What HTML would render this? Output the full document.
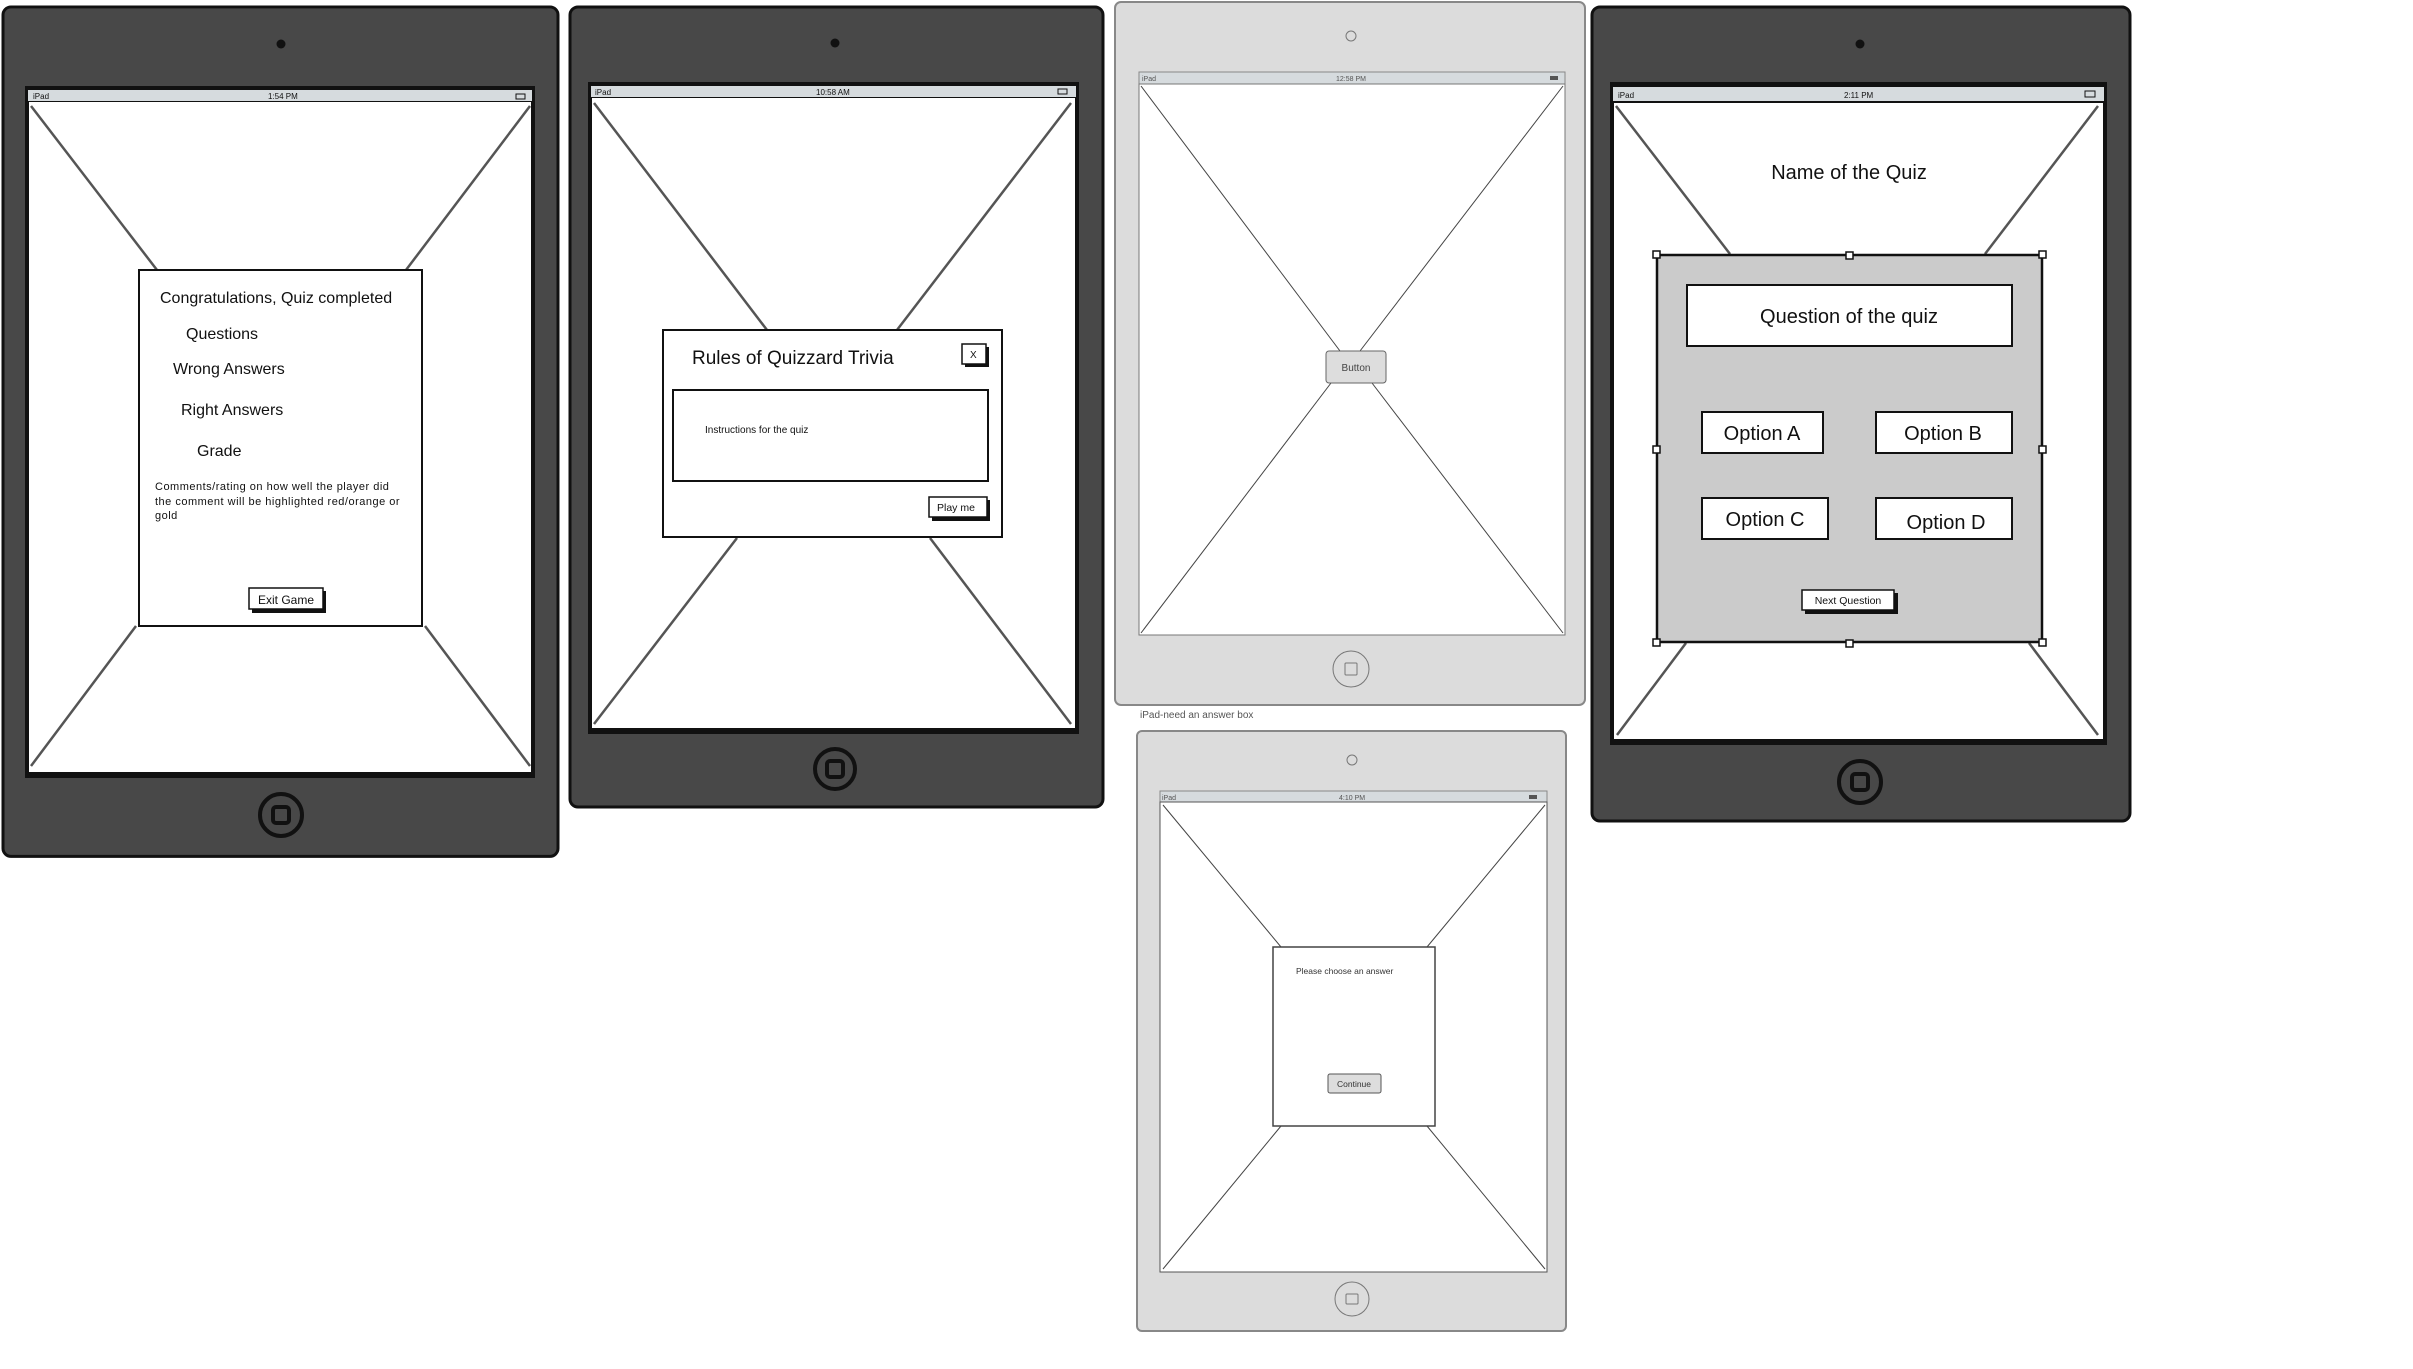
<!DOCTYPE html>
<html><head><meta charset="utf-8"><style>
html,body{margin:0;padding:0;background:#fff;width:2413px;height:1369px;overflow:hidden}
svg text{font-family:"Liberation Sans",sans-serif;fill:#111}
</style></head><body>
<svg width="2413" height="1369" viewBox="0 0 2413 1369" xmlns="http://www.w3.org/2000/svg">
<!-- Device 1 -->
<rect x="3" y="7" width="555" height="858" rx="8" fill="#484848" stroke="#111" stroke-width="3" transform="scale(1,0.99)"/>
<circle cx="281" cy="44" r="4.5" fill="#111"/>
<rect x="25" y="86" width="510" height="692" fill="#111"/>
<rect x="28" y="90" width="504" height="11" fill="#d6dbde"/>
<rect x="29" y="102" width="502" height="670" fill="#fff"/>
<text x="33" y="99" font-size="8">iPad</text><text x="268" y="99" font-size="8">1:54 PM</text>
<rect x="516" y="94" width="9" height="5" fill="none" stroke="#111"/>
<g stroke="#555" stroke-width="2.5">
<line x1="31" y1="106" x2="157" y2="270"/><line x1="530" y1="106" x2="406" y2="270"/>
<line x1="136" y1="626" x2="31" y2="766"/><line x1="425" y1="626" x2="530" y2="766"/></g>
<rect x="139" y="270" width="283" height="356" fill="#fff" stroke="#111" stroke-width="2"/>
<text x="160" y="303" font-size="16">Congratulations, Quiz completed</text>
<text x="186" y="339" font-size="16">Questions</text>
<text x="173" y="374" font-size="16">Wrong Answers</text>
<text x="181" y="415" font-size="16">Right Answers</text>
<text x="197" y="456" font-size="16">Grade</text>
<text x="155" y="490" font-size="11" letter-spacing="0.5">Comments/rating on how well the player did</text>
<text x="155" y="505" font-size="11" letter-spacing="0.5">the comment will be highlighted red/orange or</text>
<text x="155" y="519" font-size="11" letter-spacing="0.5">gold</text>
<rect x="252" y="591" width="74" height="22" fill="#111"/>
<rect x="249" y="588" width="74" height="21" fill="#fff" stroke="#111" stroke-width="1.5"/>
<text x="258" y="604" font-size="12">Exit Game</text>
<circle cx="281" cy="815" r="21" fill="none" stroke="#111" stroke-width="4"/>
<rect x="273" y="807" width="16" height="16" rx="3" fill="none" stroke="#111" stroke-width="4"/>

<!-- Device 2 -->
<rect x="570" y="7" width="533" height="800" rx="8" fill="#484848" stroke="#111" stroke-width="3"/>
<circle cx="835" cy="43" r="4.5" fill="#111"/>
<rect x="588" y="82" width="491" height="652" fill="#111"/>
<rect x="591" y="86" width="485" height="11" fill="#d6dbde"/>
<rect x="592" y="98" width="483" height="630" fill="#fff"/>
<text x="595" y="95" font-size="8">iPad</text><text x="816" y="95" font-size="8">10:58 AM</text>
<rect x="1058" y="89" width="9" height="5" fill="none" stroke="#111"/>
<g stroke="#555" stroke-width="2.5">
<line x1="594" y1="103" x2="767" y2="330"/><line x1="1071" y1="103" x2="897" y2="330"/>
<line x1="737" y1="538" x2="594" y2="724"/><line x1="930" y1="538" x2="1071" y2="724"/></g>
<rect x="663" y="330" width="339" height="207" fill="#fff" stroke="#111" stroke-width="2"/>
<text x="692" y="364" font-size="19">Rules of Quizzard Trivia</text>
<rect x="965" y="347" width="24" height="20" fill="#111"/>
<rect x="962" y="344" width="24" height="20" fill="#fff" stroke="#111" stroke-width="1.5"/>
<text x="970" y="358" font-size="10">X</text>
<rect x="673" y="390" width="315" height="91" fill="#fff" stroke="#111" stroke-width="2"/>
<text x="705" y="433" font-size="10">Instructions for the quiz</text>
<rect x="932" y="500" width="58" height="21" fill="#111"/>
<rect x="929" y="497" width="58" height="20" fill="#fff" stroke="#111" stroke-width="1.5"/>
<text x="937" y="511" font-size="10.5">Play me</text>
<circle cx="835" cy="769" r="20" fill="none" stroke="#111" stroke-width="4"/>
<rect x="827" y="761" width="16" height="16" rx="3" fill="none" stroke="#111" stroke-width="4"/>

<!-- Device 3 light -->
<rect x="1115" y="2" width="470" height="703" rx="6" fill="#dcdcdc" stroke="#888" stroke-width="2"/>
<circle cx="1351" cy="36" r="5" fill="none" stroke="#777"/>
<rect x="1139" y="72" width="426" height="12" fill="#d6dbde" stroke="#888"/>
<rect x="1139" y="84" width="426" height="551" fill="#fff" stroke="#777"/>
<text x="1142" y="81" font-size="7" style="fill:#555">iPad</text><text x="1336" y="81" font-size="7" style="fill:#555">12:58 PM</text>
<rect x="1550" y="76" width="8" height="4" fill="#555"/>
<g stroke="#444" stroke-width="1">
<line x1="1141" y1="86" x2="1340" y2="351"/><line x1="1563" y1="86" x2="1360" y2="351"/>
<line x1="1331" y1="383" x2="1141" y2="633"/><line x1="1372" y1="383" x2="1563" y2="633"/></g>
<rect x="1326" y="351" width="60" height="32" rx="3" fill="#ddd" stroke="#666"/>
<text x="1356" y="371" font-size="10" text-anchor="middle" style="fill:#444">Button</text>
<circle cx="1351" cy="669" r="18" fill="none" stroke="#777"/>
<rect x="1345" y="663" width="12" height="12" rx="1" fill="none" stroke="#777"/>
<text x="1140" y="718" font-size="10" style="fill:#555">iPad-need an answer box</text>

<!-- Device 4 light -->
<rect x="1137" y="731" width="429" height="600" rx="5" fill="#dcdcdc" stroke="#888" stroke-width="2"/>
<circle cx="1352" cy="760" r="5" fill="none" stroke="#777"/>
<rect x="1160" y="791" width="387" height="11" fill="#d6dbde" stroke="#888"/>
<rect x="1160" y="802" width="387" height="470" fill="#fff" stroke="#555"/>
<text x="1162" y="800" font-size="7" style="fill:#555">iPad</text><text x="1339" y="800" font-size="7" style="fill:#555">4:10 PM</text>
<rect x="1529" y="795" width="8" height="4" fill="#555"/>
<g stroke="#444" stroke-width="1">
<line x1="1163" y1="805" x2="1281" y2="947"/><line x1="1545" y1="805" x2="1427" y2="947"/>
<line x1="1281" y1="1126" x2="1163" y2="1269"/><line x1="1427" y1="1126" x2="1545" y2="1269"/></g>
<rect x="1273" y="947" width="162" height="179" fill="#fff" stroke="#444" stroke-width="1.5"/>
<text x="1296" y="974" font-size="8.5" style="fill:#333">Please choose an answer</text>
<rect x="1328" y="1074" width="53" height="19" rx="2" fill="#ddd" stroke="#555"/>
<text x="1354" y="1087" font-size="8.5" text-anchor="middle" style="fill:#333">Continue</text>
<circle cx="1352" cy="1299" r="17" fill="none" stroke="#777"/>
<rect x="1346" y="1294" width="12" height="10" rx="1" fill="none" stroke="#777"/>

<!-- Device 5 -->
<rect x="1592" y="7" width="538" height="814" rx="8" fill="#484848" stroke="#111" stroke-width="3"/>
<circle cx="1860" cy="44" r="4.5" fill="#111"/>
<rect x="1610" y="82" width="497" height="663" fill="#111"/>
<rect x="1613" y="87" width="491" height="14" fill="#d6dbde"/>
<rect x="1614" y="103" width="489" height="636" fill="#fff"/>
<text x="1618" y="98" font-size="8">iPad</text><text x="1844" y="98" font-size="8">2:11 PM</text>
<rect x="2085" y="91" width="10" height="6" fill="none" stroke="#111"/>
<g stroke="#555" stroke-width="2.5">
<line x1="1616" y1="106" x2="1730" y2="254"/><line x1="2098" y1="106" x2="1985" y2="254"/>
<line x1="1686" y1="643" x2="1617" y2="735"/><line x1="2029" y1="643" x2="2098" y2="735"/></g>
<text x="1849" y="179" font-size="20" text-anchor="middle">Name of the Quiz</text>
<rect x="1657" y="255" width="385" height="387" fill="#cbcbcb" stroke="#111" stroke-width="2.5"/>
<g fill="#fff" stroke="#111" stroke-width="1.5">
<rect x="1653" y="251" width="7" height="7"/><rect x="1846" y="252" width="7" height="7"/><rect x="2039" y="251" width="7" height="7"/>
<rect x="1653" y="446" width="7" height="7"/><rect x="2039" y="446" width="7" height="7"/>
<rect x="1653" y="639" width="7" height="7"/><rect x="1846" y="640" width="7" height="7"/><rect x="2039" y="639" width="7" height="7"/></g>
<g fill="#fff" stroke="#111" stroke-width="2">
<rect x="1687" y="285" width="325" height="61"/>
<rect x="1702" y="412" width="121" height="41"/><rect x="1876" y="412" width="136" height="41"/>
<rect x="1702" y="498" width="126" height="41"/><rect x="1876" y="498" width="136" height="41"/></g>
<text x="1849" y="323" font-size="20" text-anchor="middle">Question of the quiz</text>
<text x="1762" y="440" font-size="20" text-anchor="middle">Option A</text>
<text x="1943" y="440" font-size="20" text-anchor="middle">Option B</text>
<text x="1765" y="526" font-size="20" text-anchor="middle">Option C</text>
<text x="1946" y="529" font-size="20" text-anchor="middle">Option D</text>
<rect x="1805" y="593" width="93" height="21" fill="#111"/>
<rect x="1802" y="590" width="92" height="20" fill="#fff" stroke="#111" stroke-width="1.5"/>
<text x="1848" y="604" font-size="10.5" text-anchor="middle">Next Question</text>
<circle cx="1860" cy="782" r="21" fill="none" stroke="#111" stroke-width="4"/>
<rect x="1852" y="774" width="16" height="16" rx="3" fill="none" stroke="#111" stroke-width="4"/>
</svg>
</body></html>
